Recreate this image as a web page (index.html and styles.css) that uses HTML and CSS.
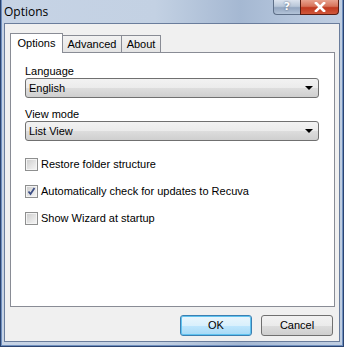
FILE: index.html
```html
<!DOCTYPE html>
<html>
<head>
<meta charset="utf-8">
<link rel="stylesheet" href="styles.css">
</head>
<body>
<div class="window">
  <div class="titlebar">
    <span class="title">Options</span>
    <div class="caption-btns">
      <div class="cap-help">?</div>
      <div class="cap-close">
        <svg width="14" height="10" viewBox="0 0 14 10"><path d="M3 1 L11 9 M11 1 L3 9" stroke="#fff" stroke-width="2.6" stroke-linecap="square"/></svg>
      </div>
    </div>
  </div>
  <div class="client">
    <div class="tabs">
      <div class="tab tab-active w-options">Options</div>
      <div class="tab w-advanced">Advanced</div>
      <div class="tab w-about">About</div>
    </div>
    <div class="panel">
      <div class="label">Language</div>
      <div class="combo"><span>English</span><span class="arrow"></span></div>
      <div class="label label-second">View mode</div>
      <div class="combo"><span>List View</span><span class="arrow"></span></div>
      <div class="checks">
        <div class="check-row"><span class="box"></span><span>Restore folder structure</span></div>
        <div class="check-row"><span class="box checked"><svg width="9" height="9" viewBox="0 0 9 9"><path d="M1.5 4.5 L3.5 7 L7.5 1" fill="none" stroke="#3d4f86" stroke-width="1.8"/></svg></span><span>Automatically check for updates to Recuva</span></div>
        <div class="check-row"><span class="box"></span><span>Show Wizard at startup</span></div>
      </div>
    </div>
    <div class="buttons">
      <div class="btn btn-default">OK</div>
      <div class="btn">Cancel</div>
    </div>
  </div>
</div>
</body>
</html>
```
FILE: styles.css
```css
* { box-sizing: border-box; }
html, body { margin: 0; padding: 0; }
body {
  width: 344px;
  height: 347px;
  overflow: hidden;
  font-family: "Liberation Sans", Arial, sans-serif;
  font-size: 11px;
  color: #000;
}
.window {
  width: 344px;
  height: 347px;
  display: flex;
  flex-direction: column;
  padding: 0 3px 4px 3px;
  background: linear-gradient(to right, #c6d3e5 0%, #c3d1e3 45%, #a5b8d2 70%, #b4c5dc 85%, #c0cee1 100%);
  border-left: 1px solid #2b4470;
  border-right: 1px solid #2b4470;
  border-bottom: 1px solid #2b4470;
  box-shadow: inset 1px 0 0 #6f8fbf, inset -1px 0 0 #6f8fbf, inset 0 -1px 0 #6f8fbf;
}
.titlebar {
  height: 23px;
  flex: none;
  display: flex;
  align-items: flex-start;
  justify-content: space-between;
}
.title {
  font-family: "Open Sans", "Liberation Sans", sans-serif;
  font-size: 12px;
  line-height: 14px;
  margin-top: 5px;
  margin-left: 0;
  color: #000;
}
.caption-btns {
  display: flex;
  margin-right: 1px;
}
.cap-help {
  width: 27px;
  height: 15px;
  border: 1px solid #5e6f88;
  border-top: none;
  border-right: none;
  border-radius: 0 0 0 4px;
  background: linear-gradient(#dbe3ee 0%, #b9c7d9 45%, #93a6c0 55%, #b3c3d8 100%);
  color: #fff;
  font-family: "DejaVu Sans", sans-serif;
  font-weight: bold;
  font-size: 11px;
  line-height: 13px;
  text-align: center;
  text-shadow: 0 0 2px #40506a;
}
.cap-close {
  width: 39px;
  height: 15px;
  border: 1px solid #5a1d12;
  border-top: none;
  border-radius: 0 0 4px 0;
  background: linear-gradient(#e8a28f 0%, #d7735a 45%, #c0391f 55%, #d0583b 100%);
  display: flex;
  align-items: center;
  justify-content: center;
}
.client {
  flex: 1;
  background: #f0f0f0;
  border: 1px solid #6a7d9c;
  display: flex;
  flex-direction: column;
  padding: 9px 6px 0 5px;
}
.tabs {
  display: flex;
  align-items: flex-end;
  height: 20px;
  margin-bottom: -1px;
}
.tab {
  height: 18px;
  border: 1px solid #898c95;
  border-bottom: none;
  background: linear-gradient(#f2f2f2, #e3e3e3);
  text-align: center;
  line-height: 16px;
  margin-left: -1px;
}
.tab-active {
  height: 20px;
  background: #fff;
  position: relative;
  z-index: 1;
  margin-left: 0;
  line-height: 18px;
}
.w-options { width: 53px; }
.w-advanced { width: 60px; }
.w-about { width: 40px; }
.panel {
  width: 325px;
  height: 255px;
  background: #fff;
  border: 1px solid #898c95;
  padding: 12px 0 0 14px;
}
.label {
  height: 13px;
  line-height: 13px;
}
.label-second { margin-top: 10px; }
.combo {
  width: 294px;
  height: 20px;
  border: 1px solid #707070;
  border-radius: 3px;
  background: linear-gradient(#f2f2f2 0%, #ebebeb 50%, #dddddd 51%, #cfcfcf 100%);
  display: flex;
  align-items: center;
  justify-content: space-between;
  padding: 0 4px 0 3px;
  line-height: 16px;
}
.arrow {
  width: 0;
  height: 0;
  border-left: 4px solid transparent;
  border-right: 4px solid transparent;
  border-top: 4px solid #000;
  margin-right: 1px;
}
.checks {
  margin-top: 17px;
  display: flex;
  flex-direction: column;
  gap: 14px;
}
.check-row {
  display: flex;
  align-items: center;
  height: 13px;
  gap: 3px;
  line-height: 13px;
}
.box {
  width: 13px;
  height: 13px;
  border: 1px solid #8e8f8f;
  background: linear-gradient(135deg, #cbcbcb 0%, #e6e6e6 60%, #f6f6f6 100%);
  box-shadow: inset 0 0 0 1px #f4f4f4;
  display: flex;
  align-items: center;
  justify-content: center;
}
.buttons {
  display: flex;
  justify-content: flex-end;
  gap: 9px;
  margin-top: 8px;
  padding-right: 0;
}
.btn {
  width: 72px;
  height: 21px;
  border: 1px solid #707070;
  border-radius: 3px;
  background: linear-gradient(#f2f2f2 0%, #ebebeb 50%, #dddddd 51%, #cfcfcf 100%);
  text-align: center;
  line-height: 19px;
}
.btn-default {
  border-color: #3c7fb1;
  background: linear-gradient(#eaf6fd 0%, #d9f0fc 50%, #bee6fd 51%, #a7d9f5 100%);
  box-shadow: inset 0 0 0 1px #5fc3f0;
}
```
